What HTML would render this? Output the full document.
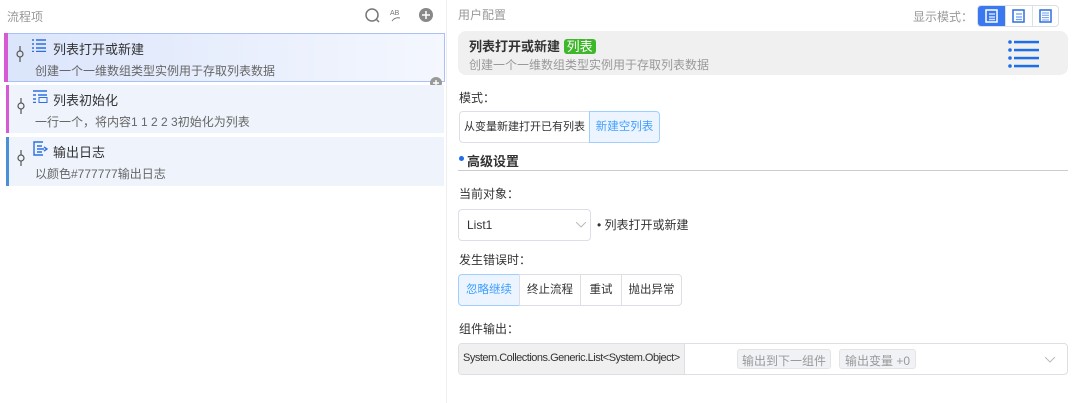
<!DOCTYPE html>
<html><head><meta charset="utf-8"><style>
*{box-sizing:border-box;margin:0;padding:0}
body{width:1078px;height:403px;background:#fff;font-family:"Liberation Sans","Noto Sans CJK SC",sans-serif;font-size:12px;color:#333;position:relative;overflow:hidden}
.a{position:absolute;white-space:nowrap}
.card{position:absolute;left:6px;width:438px;background:#eef3fc;}
.card .bar{position:absolute;left:0;top:0;bottom:0;width:3px}
.card .t{position:absolute;left:47px;top:5px;font-size:13px;color:#333;white-space:nowrap}
.card .d{position:absolute;left:29px;top:28px;font-size:12px;color:#666;white-space:nowrap}
.pin{position:absolute;left:11px;top:12px;width:8px;height:16px}
.btn{position:absolute;height:32px;border:1px solid #dcdfe6;background:#fff;font-size:11.5px;color:#333;text-align:center;line-height:30px;white-space:nowrap;overflow:hidden}
.btn.on{background:#ecf5ff;border-color:#a0cfff;color:#409eff}
</style></head><body>
<div class="a" style="left:7px;top:8px;font-size:12px;color:#999">流程项</div>
<svg class="a" style="left:363px;top:7px" width="80" height="18">
<circle cx="9" cy="8" r="6" fill="none" stroke="#777" stroke-width="1.5"/><line x1="13" y1="12" x2="16" y2="15" stroke="#777" stroke-width="1.5"/>
<text x="27" y="8" font-size="7" fill="#777" font-family="Liberation Sans">AB</text><path d="M29 14 q3 -4 8 -3" stroke="#777" fill="none"/>
<circle cx="63" cy="8" r="7" fill="#888"/><path d="M59 8h8M63 4v8" stroke="#fff" stroke-width="1.5"/></svg>
<div class="a" style="left:446px;top:0;width:1px;height:403px;background:#eee"></div>

<div class="card" style="left:4px;top:33px;height:49px;width:441px;background:linear-gradient(90deg,#dbe5fb,#f4f7fe);border:1px solid #a9c1f6"><div class="bar" style="background:#d65ad6;left:-1px;top:-1px;bottom:-1px;width:4px"></div>
<svg class="pin" viewBox="0 0 8 16"><circle cx="4" cy="8" r="3" fill="none" stroke="#555" stroke-width="1.2"/><path d="M4 0v5M4 11v5" stroke="#555" stroke-width="1.2"/></svg>
<svg class="a" style="left:27px;top:5px" width="14" height="13"><path d="M0 1h2M4 1h10M0 5h2M4 5h10M0 9h2M4 9h10M0 12.5h2M4 12.5h10" stroke="#2d6fe0" stroke-width="1.6"/></svg>
<div class="t" style="left:48px">列表打开或新建</div><div class="d" style="left:30px">创建一个一维数组类型实例用于存取列表数据</div></div>
<svg class="a" style="left:430px;top:77px" width="12" height="12"><circle cx="6" cy="6" r="6" fill="#999"/><path d="M3 6h6M6 3v6" stroke="#fff" stroke-width="1.4"/></svg>

<div class="card" style="top:85px;height:48px"><div class="bar" style="background:#d65ad6"></div>
<svg class="pin" viewBox="0 0 8 16" style="top:13px"><circle cx="4" cy="8" r="3" fill="none" stroke="#555" stroke-width="1.2"/><path d="M4 0v5M4 11v5" stroke="#555" stroke-width="1.2"/></svg>
<svg class="a" style="left:27px;top:5px" width="15" height="13"><path d="M0 1h14M0 5h3M5 5h9M0 9h3M0 12.5h3" stroke="#2d6fe0" stroke-width="1.5"/><rect x="6" y="7.5" width="8" height="5" fill="none" stroke="#2d6fe0"/></svg>
<div class="t">列表初始化</div><div class="d">一行一个，将内容1 1 2 2 3初始化为列表</div></div>

<div class="card" style="top:137px;height:49px"><div class="bar" style="background:#4a90d9"></div>
<svg class="pin" viewBox="0 0 8 16" style="top:13px"><circle cx="4" cy="8" r="3" fill="none" stroke="#555" stroke-width="1.2"/><path d="M4 0v5M4 11v5" stroke="#555" stroke-width="1.2"/></svg>
<svg class="a" style="left:27px;top:4px" width="15" height="15"><path d="M10 1H1v13h9M4 5h5M4 8h7M4 11h5M11 6l3 2-3 2" stroke="#2d6fe0" stroke-width="1.4" fill="none"/></svg>
<div class="t">输出日志</div><div class="d">以颜色#777777输出日志</div></div>

<div class="a" style="left:458px;top:6px;color:#999">用户配置</div>
<div class="a" style="left:913px;top:8px;color:#999">显示模式：</div>
<div class="a" style="left:977px;top:5px;width:82px;height:22px;border:1px solid #dcdfe6;border-radius:4px;overflow:hidden">
<div class="a" style="left:0;top:0;width:27px;height:22px;background:#3a78f0"></div>
<div class="a" style="left:27px;top:0;width:1px;height:22px;background:#dcdfe6"></div>
<div class="a" style="left:54px;top:0;width:1px;height:22px;background:#dcdfe6"></div>
<svg class="a" style="left:7px;top:3px" width="14" height="14"><rect x="1" y="1" width="11" height="12" fill="none" stroke="#fff" stroke-width="1.5"/><path d="M4 5h6M4 8h6M4 10.5h6" stroke="#cfe0ff" stroke-width="1.5"/></svg>
<svg class="a" style="left:34px;top:3px" width="14" height="14"><rect x="1" y="1" width="11" height="12" fill="none" stroke="#2d6fe0" stroke-width="1.5"/><path d="M4 5h6M4 8h6M4 10.5h6" stroke="#6a9ef0" stroke-width="1.3"/></svg>
<svg class="a" style="left:61px;top:3px" width="14" height="14"><rect x="1" y="1" width="11" height="12" fill="none" stroke="#2d6fe0" stroke-width="1.5"/><path d="M3 4h7M3 6.3h7M3 8.6h7M3 11h7" stroke="#6a9ef0" stroke-width="1"/></svg>
</div>

<div class="a" style="left:458px;top:31px;width:610px;height:44px;background:#f0f0f0;border-radius:8px">
<div class="a" style="left:11px;top:5px;font-size:13px;font-weight:bold;color:#333">列表打开或新建 <span style="background:#3eb82a;color:#fff;font-weight:normal;border-radius:3px;padding:0 3px">列表</span></div>
<div class="a" style="left:11px;top:25px;color:#999">创建一个一维数组类型实例用于存取列表数据</div>
<svg class="a" style="left:550px;top:9px" width="32" height="30"><g fill="#1e6ee8"><circle cx="2" cy="2" r="1.8"/><circle cx="2" cy="10" r="1.8"/><circle cx="2" cy="18" r="1.8"/><circle cx="2" cy="26" r="1.8"/><rect x="6" y="0.8" width="25" height="2.5"/><rect x="6" y="8.8" width="25" height="2.5"/><rect x="6" y="16.8" width="25" height="2.5"/><rect x="6" y="24.8" width="25" height="2.5"/></g></svg>
</div>

<div class="a" style="left:459px;top:89px">模式：</div>
<div class="btn" style="left:459px;top:111px;width:131px;border-radius:4px 0 0 4px;font-size:11px">从变量新建打开已有列表</div>
<div class="btn on" style="left:589px;top:111px;width:71px;border-radius:0 4px 4px 0">新建空列表</div>
<div class="a" style="left:459px;top:156px;width:5px;height:5px;border-radius:50%;background:#1e6ee8"></div>
<div class="a" style="left:467px;top:151px;font-size:13px;font-weight:bold;color:#333">高级设置</div>
<div class="a" style="left:458px;top:170px;width:610px;height:1px;background:#ccc"></div>
<div class="a" style="left:459px;top:185px">当前对象：</div>
<div class="a" style="left:458px;top:209px;width:133px;height:32px;border:1px solid #dcdfe6;border-radius:4px;padding:8px 0 0 8px">List1</div>
<svg class="a" style="left:576px;top:222px" width="10" height="6"><path d="M0 0l5 5 5-5" fill="none" stroke="#bbb"/></svg>
<div class="a" style="left:597px;top:216px">• 列表打开或新建</div>
<div class="a" style="left:459px;top:251px">发生错误时：</div>
<div class="btn on" style="left:458px;top:274px;width:62px;border-radius:4px 0 0 4px">忽略继续</div>
<div class="btn" style="left:519px;top:274px;width:62px">终止流程</div>
<div class="btn" style="left:580px;top:274px;width:42px">重试</div>
<div class="btn" style="left:621px;top:274px;width:61px;border-radius:0 4px 4px 0">抛出异常</div>
<div class="a" style="left:459px;top:320px">组件输出：</div>
<div class="a" style="left:458px;top:343px;width:610px;height:32px;border:1px solid #dcdfe6;border-radius:4px;overflow:hidden">
<div class="a" style="left:0;top:0;width:226px;height:30px;background:#f0f0f0;border-right:1px solid #dcdfe6;padding:8px 0 0 4px;color:#333;font-size:11px;letter-spacing:-0.5px">System.Collections.Generic.List&lt;System.Object&gt;</div>
<div class="a" style="left:278px;top:5px;height:20px;padding:2px 4px;background:#f0f2f5;border:1px solid #e4e4e4;border-radius:3px;color:#999">输出到下一组件</div>
<div class="a" style="left:380px;top:5px;height:20px;padding:2px 5px;background:#f0f2f5;border:1px solid #e4e4e4;border-radius:3px;color:#999">输出变量 +0</div>
<svg class="a" style="left:586px;top:13px" width="10" height="6"><path d="M0 0l5 5 5-5" fill="none" stroke="#bbb"/></svg>
</div>
</body></html>
